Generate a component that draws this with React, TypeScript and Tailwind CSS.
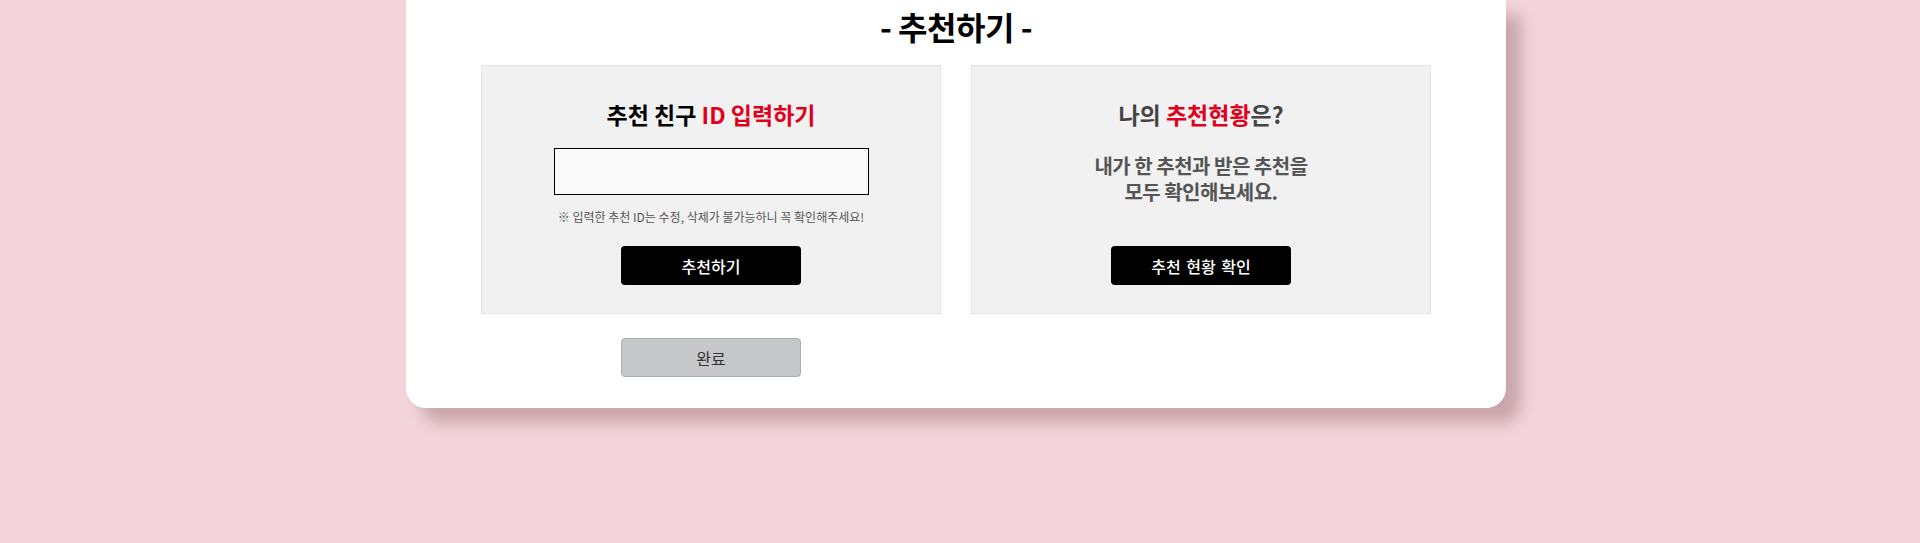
const font = { fontFamily: '"Noto Sans CJK KR", "Noto Sans", sans-serif' };

const App = () => {
  return (
    <div className="min-h-[543px] w-full bg-[#f2d4da]" style={font}>
      <div className="flex justify-center pr-[8px]">
        <div className="w-[1100px] rounded-b-[20px] bg-white pt-[6px] pb-[31px] shadow-[15px_15px_15px_rgba(60,0,10,0.22)]">
          <h2 className="text-center text-[32px] font-bold leading-[40px] tracking-[-0.5px] text-black">
            - 추천하기 -
          </h2>
          <div className="mx-auto mt-[19px] grid w-[950px] grid-cols-2 gap-x-[30px]">
            <div className="flex h-[249px] flex-col items-center border border-[#e4e4e4] bg-[#f1f1f1] pt-[33px] pb-[28px]">
              <h3 className="text-[23px] font-bold leading-[30px] text-black">
                추천 친구 <span className="text-[#e0001b]">ID 입력하기</span>
              </h3>
              <input
                type="text"
                className="mt-[19px] h-[47px] w-[315px] border border-black bg-[#fafafa] px-3 text-[15px] outline-none"
              />
              <p className="mt-[13px] text-[12px] leading-[18px] text-[#555]">
                ※ 입력한 추천 ID는 수정, 삭제가 불가능하니 꼭 확인해주세요!
              </p>
              <button className="mt-auto h-[39px] w-[180px] rounded-[4px] bg-black text-[16px] font-medium text-white">
                추천하기
              </button>
            </div>
            <div className="flex h-[249px] flex-col items-center border border-[#e4e4e4] bg-[#f1f1f1] pt-[33px] pb-[28px]">
              <h3 className="text-[23px] font-bold leading-[30px] text-[#444]">
                나의 <span className="text-[#e0001b]">추천현황</span>은?
              </h3>
              <div className="mt-[24px] flex flex-col items-center text-[20px] font-bold leading-[26px] tracking-[-0.5px] text-[#555]">
                <p>내가 한 추천과 받은 추천을</p>
                <p>모두 확인해보세요.</p>
              </div>
              <button className="mt-auto h-[39px] w-[180px] rounded-[4px] bg-black text-[16px] font-medium text-white [word-spacing:2px]">
                추천 현황 확인
              </button>
            </div>
            <div className="mt-[24px] flex justify-center">
              <button className="h-[39px] w-[180px] rounded-[4px] border border-[#adadad] bg-[#c6c7c9] text-[16px] text-[#333]">
                완료
              </button>
            </div>
          </div>
        </div>
      </div>
    </div>
  );
};

export default App;
